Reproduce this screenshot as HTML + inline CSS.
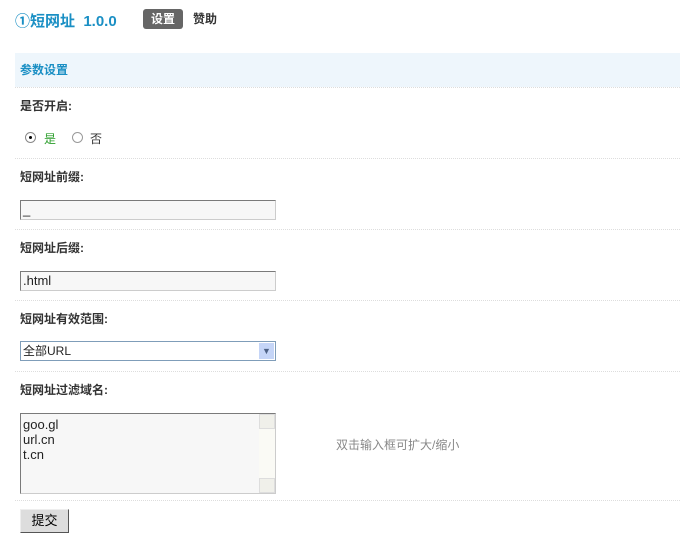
<!DOCTYPE html>
<html><head><meta charset="utf-8"><style>
body{margin:0;width:680px;height:556px;background:#fff;font-family:"Liberation Sans","Noto Sans CJK SC",sans-serif;font-size:12px;color:#333;position:relative;overflow:hidden}
.a{position:absolute}
.lab{position:absolute;left:20px;font-weight:bold;font-size:12px;color:#333}
.sep{position:absolute;left:15px;width:665px;border-top:1px dotted #ddd;height:0}
.inp{position:absolute;left:20px;width:254px;height:18px;border:1px solid #888;border-color:#7a7a7a #ccc #ccc #7a7a7a;background:#f7f7f7;font-size:13px;line-height:18px;padding-left:2px;box-sizing:border-box;width:256px;height:20px;color:#222}
</style></head><body>
<div class="a" style="left:15px;top:10px;font-size:15px;font-weight:bold;color:#1a8fc4">①短网址&nbsp; 1.0.0</div>
<div class="a" style="left:143px;top:9px;width:40px;height:20px;background:#666;border-radius:3px;color:#fff;font-weight:bold;text-align:center;line-height:20px">设置</div>
<div class="a" style="left:193px;top:10px;font-weight:bold;color:#333;line-height:18px">赞助</div>
<div class="a" style="left:15px;top:53px;width:665px;height:34px;background:#eef6fc"></div>
<div class="a" style="left:20px;top:62px;font-weight:bold;color:#1a8fc4;line-height:16px">参数设置</div>
<div class="sep" style="top:87px"></div>
<div class="lab" style="top:97px">是否开启:</div>
<div class="a" style="left:25px;top:132px;width:9px;height:9px;border-radius:50%;border:1px solid #888;background:#fff"><div style="position:absolute;left:3px;top:3px;width:3px;height:3px;background:#000;border-radius:50%"></div></div>
<div class="a" style="left:44px;top:130px;color:#2a9d2a">是</div>
<div class="a" style="left:72px;top:132px;width:9px;height:9px;border-radius:50%;border:1px solid #999;background:#fff"></div>
<div class="a" style="left:90px;top:130px;color:#333">否</div>
<div class="sep" style="top:158px"></div>
<div class="lab" style="top:168px">短网址前缀:</div>
<div class="inp" style="top:200px">_</div>
<div class="sep" style="top:229px"></div>
<div class="lab" style="top:239px">短网址后缀:</div>
<div class="inp" style="top:271px">.html</div>
<div class="sep" style="top:300px"></div>
<div class="lab" style="top:310px">短网址有效范围:</div>
<div class="inp" style="top:341px;border:1px solid #7f9db9;background:#fff;font-size:12px">全部URL
<div style="position:absolute;right:1px;top:1px;width:15px;height:16px;background:#c5d5f7;border:0;color:#4d6185;font-size:9px;text-align:center;line-height:16px">▼</div></div>
<div class="sep" style="top:371px"></div>
<div class="lab" style="top:381px">短网址过滤域名:</div>
<div class="inp" style="top:413px;height:81px;line-height:15px;padding-top:3px">goo.gl<br>url.cn<br>t.cn
<div style="position:absolute;right:0;top:0;width:16px;height:79px;background:#fafaf5"><div style="height:15px;border:1px solid #ddd;box-sizing:border-box;background:#f0f0ea"></div><div style="position:absolute;bottom:0;width:16px;height:15px;border:1px solid #ddd;box-sizing:border-box;background:#f0f0ea"></div></div></div>
<div class="a" style="left:336px;top:436px;color:#888">双击输入框可扩大/缩小</div>
<div class="sep" style="top:500px"></div>
<div class="a" style="left:20px;top:509px;width:47px;height:22px;background:#ddd;border:1px solid;border-color:#eee #555 #555 #eee;text-align:center;line-height:22px;font-size:13px;color:#000">提交</div>
</body></html>
